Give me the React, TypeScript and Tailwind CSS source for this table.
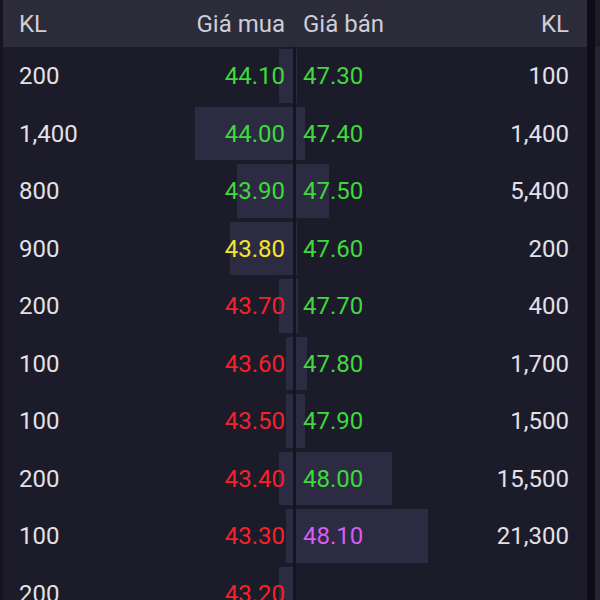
import React from 'react';

type Row = {
  bidQty: number;
  bid: string;
  bidColor: string;
  ask?: string;
  askColor?: string;
  askQty?: number;
};

const GREEN = 'text-[#3cda3c]';
const RED = 'text-[#f7212a]';
const YELLOW = 'text-[#f6e62a]';
const PURPLE = 'text-[#d65cf2]';

const rows: Row[] = [
  { bidQty: 200, bid: '44.10', bidColor: GREEN, ask: '47.30', askColor: GREEN, askQty: 100 },
  { bidQty: 1400, bid: '44.00', bidColor: GREEN, ask: '47.40', askColor: GREEN, askQty: 1400 },
  { bidQty: 800, bid: '43.90', bidColor: GREEN, ask: '47.50', askColor: GREEN, askQty: 5400 },
  { bidQty: 900, bid: '43.80', bidColor: YELLOW, ask: '47.60', askColor: GREEN, askQty: 200 },
  { bidQty: 200, bid: '43.70', bidColor: RED, ask: '47.70', askColor: GREEN, askQty: 400 },
  { bidQty: 100, bid: '43.60', bidColor: RED, ask: '47.80', askColor: GREEN, askQty: 1700 },
  { bidQty: 100, bid: '43.50', bidColor: RED, ask: '47.90', askColor: GREEN, askQty: 1500 },
  { bidQty: 200, bid: '43.40', bidColor: RED, ask: '48.00', askColor: GREEN, askQty: 15500 },
  { bidQty: 100, bid: '43.30', bidColor: RED, ask: '48.10', askColor: PURPLE, askQty: 21300 },
  { bidQty: 200, bid: '43.20', bidColor: RED },
];

const fmt = (n: number) => n.toLocaleString('en-US');

function BookRow({ row }: { row: Row }) {
  // bar widths in px, scaled from volume
  const bidW = row.bidQty * 0.07;
  const askW = (row.askQty ?? 0) * 0.0062;

  return (
    <div className="flex h-[57.5px] shrink-0">
      {/* bid side */}
      <div className="relative flex w-[290px] items-center justify-between pl-4 pr-[8px] pt-[1px]">
        <div className="absolute right-0 top-[2px] bottom-[2px] bg-[#2d2b41]" style={{ width: bidW }} />
        <span className="relative text-[#e2e1e8]">{fmt(row.bidQty)}</span>
        <span className={`relative ${row.bidColor}`}>{row.bid}</span>
      </div>
      <div className="w-[3px] bg-[#16151f]" />
      {/* ask side */}
      <div className="relative flex w-[291px] items-center justify-between pl-[7px] pr-[18px] pt-[1px]">
        {row.askQty ? (
          <div className="absolute left-0 top-[2px] bottom-[2px] bg-[#2d2b41]" style={{ width: askW }} />
        ) : null}
        <span className={`relative ${row.askColor ?? ''}`}>{row.ask ?? ''}</span>
        <span className="relative text-[#e2e1e8]">{row.askQty ? fmt(row.askQty) : ''}</span>
      </div>
    </div>
  );
}

export default function App() {
  return (
    <div
      className="flex h-[600px] w-[600px] overflow-hidden bg-[#1c1b29] text-[24px]"
      style={{ fontFamily: 'Roboto, "Liberation Sans", sans-serif' }}
    >
      <div className="w-[3px] bg-[#15141f]" />
      <div className="flex w-[584px] flex-col">
        {/* header */}
        <div className="flex h-[47px] shrink-0 items-center bg-[#2c2b39] text-[#cfcdd6]">
          <div className="flex w-[290px] justify-between pl-4 pr-[8px]">
            <span>KL</span>
            <span>Giá mua</span>
          </div>
          <div className="w-[3px]" />
          <div className="flex w-[291px] justify-between pl-[7px] pr-[18px]">
            <span>Giá bán</span>
            <span>KL</span>
          </div>
        </div>
        {rows.map((r, i) => (
          <BookRow key={i} row={r} />
        ))}
      </div>
      <div className="w-[8px] bg-[#0e0d17]" />
      <div className="flex w-[5px] flex-col">
        <div className="h-[47px] bg-[#1c1b28]" />
        <div className="flex-1 bg-[#262535]" />
      </div>
    </div>
  );
}
